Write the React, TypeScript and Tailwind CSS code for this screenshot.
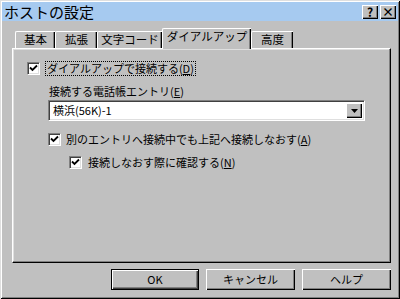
import type { ReactNode } from 'react';

const FONT = "font-['Noto_Sans_CJK_JP','Noto_Sans',sans-serif]";

const TABS = [
  { label: '基本', w: 'w-[40px]' },
  { label: '拡張', w: 'w-[42px]' },
  { label: '文字コード', w: 'w-[65px]' },
  { label: 'ダイアルアップ', w: 'w-[89px]', active: true },
  { label: '高度', w: 'w-[42px]' },
];

function Check() {
  return (
    <div className="w-[13px] h-[13px] shrink-0 bg-white border-t border-l border-t-[#808080] border-l-[#808080] border-b border-r border-b-white border-r-white shadow-[inset_1px_1px_#404040,inset_-1px_-1px_#dfdfdf] flex items-center justify-center">
      <svg width="9" height="9" viewBox="0 0 9 9">
        <path d="M1 3.5 L3.5 6 L8 1.5" fill="none" stroke="#000" strokeWidth="1.8" />
      </svg>
    </div>
  );
}

function Label({ text, acc }: { text: string; acc: string }) {
  return (
    <span>
      {text}(<span className="underline underline-offset-1">{acc}</span>)
    </span>
  );
}

function Button({ children, def }: { children: ReactNode; def?: boolean }) {
  return (
    <div
      className={`h-[21px] flex items-center justify-center text-[11px] leading-none bg-[#c0c0c0] ${
        def
          ? 'w-[88px] border border-black shadow-[inset_1px_1px_#fff,inset_-1px_-1px_#404040,inset_-2px_-2px_#808080]'
          : 'w-[89px] shadow-[inset_1px_1px_#fff,inset_-1px_-1px_#000,inset_-2px_-2px_#808080]'
      }`}
    >
      {children}
    </div>
  );
}

export default function App() {
  return (
    <div
      className={`w-[400px] h-[299px] bg-[#c0c0c0] p-[2px] text-black ${FONT} shadow-[inset_1px_1px_#dfdfdf,inset_-1px_-1px_#000,inset_2px_2px_#fff,inset_-2px_-2px_#808080] overflow-hidden`}
    >
      {/* title bar */}
      <div className="h-[19px] bg-[#a6caf0] flex items-center justify-between pl-[2px] pr-[2px]">
        <span className="text-[15px] leading-none">ホストの設定</span>
        <div className="flex gap-[2px]">
          {['?', '×'].map((g) => (
            <div
              key={g}
              className="w-[16px] h-[14px] bg-[#c0c0c0] flex items-center justify-center text-[12px] font-bold leading-none shadow-[inset_1px_1px_#fff,inset_-1px_-1px_#000,inset_-2px_-2px_#808080]"
            >
              {g}
            </div>
          ))}
        </div>
      </div>

      {/* tabs */}
      <div className="h-[27px] flex items-end ml-[13px]">
        {TABS.map((t) =>
          t.active ? (
            <div
              key={t.label}
              className={`${t.w} h-[21px] -mb-[1px] relative z-10 bg-[#c0c0c0] border-t border-l border-white rounded-tl-[2px] shadow-[inset_-1px_0_#000,inset_-2px_0_#808080] flex items-start justify-center pt-[2px] text-[11.5px] leading-none`}
            >
              {t.label}
            </div>
          ) : (
            <div
              key={t.label}
              className={`${t.w} h-[17px] border-t border-l border-white rounded-tl-[2px] shadow-[inset_-1px_0_#000,inset_-2px_0_#808080] flex items-center justify-center text-[11.5px] leading-none`}
            >
              {t.label}
            </div>
          )
        )}
      </div>

      {/* panel */}
      <div className="ml-[10px] w-[379px] h-[215px] border-t border-l border-white border-r border-b border-r-black border-b-black shadow-[inset_-1px_-1px_#808080,inset_1px_1px_#dfdfdf] text-[11px] leading-none">
        <div className="flex items-center ml-[14px] mt-[13px] h-[13px]">
          <Check />
          <span className="ml-[5px] border border-dotted border-black px-[1px] py-[1px]">
            <Label text="ダイアルアップで接続する" acc="D" />
          </span>
        </div>

        <div className="ml-[36px] mt-[11px]">
          <Label text="接続する電話帳エントリ" acc="E" />
        </div>

        <div className="ml-[35px] mt-[3px] w-[317px] h-[21px] bg-white border-t border-l border-t-[#808080] border-l-[#808080] border-b border-r border-b-white border-r-white shadow-[inset_1px_1px_#404040,inset_-1px_-1px_#dfdfdf] flex items-center justify-between pl-[4px] pr-[2px]">
          <span>横浜(56K)-1</span>
          <div className="w-[16px] h-[15px] bg-[#c0c0c0] shadow-[inset_1px_1px_#fff,inset_-1px_-1px_#000,inset_-2px_-2px_#808080] flex items-center justify-center">
            <svg width="7" height="4" viewBox="0 0 7 4">
              <path d="M0 0 H7 L3.5 4 Z" fill="#000" />
            </svg>
          </div>
        </div>

        <div className="flex items-center ml-[35px] mt-[12px] h-[13px]">
          <Check />
          <span className="ml-[5px]">
            <Label text="別のエントリへ接続中でも上記へ接続しなおす" acc="A" />
          </span>
        </div>

        <div className="flex items-center ml-[56px] mt-[10px] h-[13px]">
          <Check />
          <span className="ml-[6px]">
            <Label text="接続しなおす際に確認する" acc="N" />
          </span>
        </div>
      </div>

      {/* buttons */}
      <div className="ml-[10px] w-[379px] mt-[6px] flex justify-end gap-[7px]">
        <Button def>OK</Button>
        <Button>キャンセル</Button>
        <Button>ヘルプ</Button>
      </div>
    </div>
  );
}
